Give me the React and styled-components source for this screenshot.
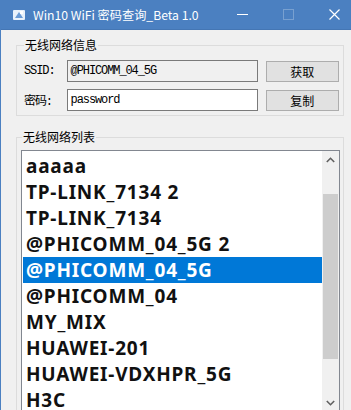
import styled, { createGlobalStyle } from "styled-components";

const NETWORKS = [
  "aaaaa",
  "TP-LINK_7134 2",
  "TP-LINK_7134",
  "@PHICOMM_04_5G 2",
  "@PHICOMM_04_5G",
  "@PHICOMM_04",
  "MY_MIX",
  "HUAWEI-201",
  "HUAWEI-VDXHPR_5G",
  "H3C",
];
const SELECTED = 4;

const GlobalStyle = createGlobalStyle`
  html, body {
    margin: 0;
    padding: 0;
    background: #f0f0f0;
  }
`;

export default function App() {
  return (
    <>
      <GlobalStyle />
      <Window>
        <TitleBar>
          <AppIcon viewBox="0 0 14 14">
            <rect x="1" y="2" width="12" height="10" rx="1" fill="#e8f1fb" />
            <path d="M3 10 L7 4 L11 10 Z" fill="#6a9bd6" />
            <rect x="8" y="3" width="3" height="3" fill="#ffffff" />
          </AppIcon>
          <Title>Win10 WiFi 密码查询_Beta 1.0</Title>
          <Caption>
            <CaptionButton>
              <svg width="11" height="11" viewBox="0 0 11 11">
                <line x1="0" y1="5.5" x2="11" y2="5.5" stroke="#fff" strokeWidth="1" />
              </svg>
            </CaptionButton>
            <CaptionButton>
              <svg width="11" height="11" viewBox="0 0 11 11">
                <rect x="0.5" y="0.5" width="10" height="10" fill="none" stroke="rgba(255,255,255,0.25)" />
              </svg>
            </CaptionButton>
            <CaptionButton>
              <svg width="11" height="11" viewBox="0 0 11 11">
                <path d="M0.5 0.5 L10.5 10.5 M10.5 0.5 L0.5 10.5" stroke="#fff" strokeWidth="1.2" />
              </svg>
            </CaptionButton>
          </Caption>
        </TitleBar>
        <Client>
          <GroupBox>
            <Legend>无线网络信息</Legend>
            <FieldRow>
              <FieldLabel>SSID:</FieldLabel>
              <TextBox readOnly>@PHICOMM_04_5G</TextBox>
              <PushButton>获取</PushButton>
            </FieldRow>
            <FieldRow>
              <FieldLabel>密码:</FieldLabel>
              <TextBox>password</TextBox>
              <PushButton>复制</PushButton>
            </FieldRow>
          </GroupBox>
          <GroupBox second>
            <Legend>无线网络列表</Legend>
            <ListBox>
              <Items>
                {NETWORKS.map((name, i) => (
                  <Item key={name} selected={i === SELECTED}>
                    {name}
                  </Item>
                ))}
              </Items>
              <ScrollBar>
                <ArrowButton>
                  <svg width="9" height="6" viewBox="0 0 9 6">
                    <polyline points="0.8,5 4.5,1.3 8.2,5" fill="none" stroke="#606060" strokeWidth="1.6" />
                  </svg>
                </ArrowButton>
                <Track>
                  <Thumb />
                </Track>
                <ArrowButton>
                  <svg width="9" height="6" viewBox="0 0 9 6">
                    <polyline points="0.8,1 4.5,4.7 8.2,1" fill="none" stroke="#606060" strokeWidth="1.6" />
                  </svg>
                </ArrowButton>
              </ScrollBar>
            </ListBox>
          </GroupBox>
        </Client>
      </Window>
    </>
  );
}

const Window = styled.div`
  width: 351px;
  height: 410px;
  box-sizing: border-box;
  border-left: 1px solid #4b80c1;
  background: #f0f0f0;
  overflow: hidden;
  display: flex;
  flex-direction: column;
`;

const TitleBar = styled.div`
  height: 30px;
  flex: none;
  background: #4b80c1;
  border-bottom: 1px solid #4476b4;
  box-sizing: border-box;
  display: flex;
  align-items: center;
  padding-left: 11px;
`;

const AppIcon = styled.svg`
  width: 14px;
  height: 14px;
  margin-right: 7px;
`;

const Title = styled.div`
  font-family: "Noto Sans CJK SC", "Noto Sans", sans-serif;
  font-size: 12.2px;
  color: #ffffff;
  flex: 1;
  white-space: nowrap;
`;

const Caption = styled.div`
  display: flex;
  height: 100%;
  margin-right: -6px;
`;

const CaptionButton = styled.div`
  width: 46px;
  display: flex;
  align-items: center;
  justify-content: center;
`;

const Client = styled.div`
  padding: 8px 7px 0 15px;
`;

const GroupBox = styled.fieldset`
  margin: ${({ second }) => (second ? "14px 0 0" : "0")};
  border: 1px solid #dcdcdc;
  padding: ${({ second }) => (second ? "6px 3px 0 4px" : "8px 4px 4px 6px")};
  min-width: 0;
`;

const Legend = styled.legend`
  font-family: "Noto Sans CJK SC", sans-serif;
  font-size: 12px;
  line-height: 14px;
  color: #000;
  padding: 0 1px;
  margin-left: 1px;
`;

const FieldRow = styled.div`
  display: flex;
  align-items: center;
  height: 22px;
  & + & {
    margin-top: 7px;
  }
`;

const FieldLabel = styled.div`
  width: 43px;
  padding-left: 1px;
  font-family: "Liberation Mono", "Noto Sans CJK SC", monospace;
  font-size: 12px;
  letter-spacing: -1.1px;
  color: #000;
`;

const TextBox = styled.div`
  width: 193px;
  height: 22px;
  box-sizing: border-box;
  border: 1px solid #7a7a7a;
  background: ${({ readOnly }) => (readOnly ? "#f0f0f0" : "#ffffff")};
  font-family: "Liberation Mono", monospace;
  font-size: 12px;
  letter-spacing: -1.1px;
  line-height: 20px;
  padding-left: 3px;
  color: #000;
`;

const PushButton = styled.div`
  margin-left: 8px;
  width: 74px;
  height: 21px;
  box-sizing: border-box;
  border: 1px solid #adadad;
  background: #e1e1e1;
  font-family: "Noto Sans CJK SC", sans-serif;
  font-size: 12px;
  color: #000;
  display: flex;
  align-items: center;
  justify-content: center;
`;

const ListBox = styled.div`
  height: 262px;
  box-sizing: border-box;
  border: 1px solid #828790;
  background: #ffffff;
  display: flex;
`;

const Items = styled.div`
  flex: 1;
  padding: 2px 0 0 1px;
  overflow: hidden;
`;

const Item = styled.div`
  height: 26px;
  padding-left: 3px;
  font-family: "Noto Sans", "Open Sans", sans-serif;
  font-weight: 700;
  font-size: 19px;
  letter-spacing: 0.8px;
  line-height: 26px;
  white-space: nowrap;
  color: ${({ selected }) => (selected ? "#ffffff" : "#111111")};
  background: ${({ selected }) => (selected ? "#0078d7" : "transparent")};
`;

const ScrollBar = styled.div`
  width: 17px;
  background: #f0f0f0;
  display: flex;
  flex-direction: column;
`;

const ArrowButton = styled.div`
  height: 17px;
  flex: none;
  display: flex;
  align-items: center;
  justify-content: center;
`;

const Track = styled.div`
  flex: 1;
  padding: 26px 1px 0;
`;

const Thumb = styled.div`
  height: 165px;
  background: #cdcdcd;
`;
